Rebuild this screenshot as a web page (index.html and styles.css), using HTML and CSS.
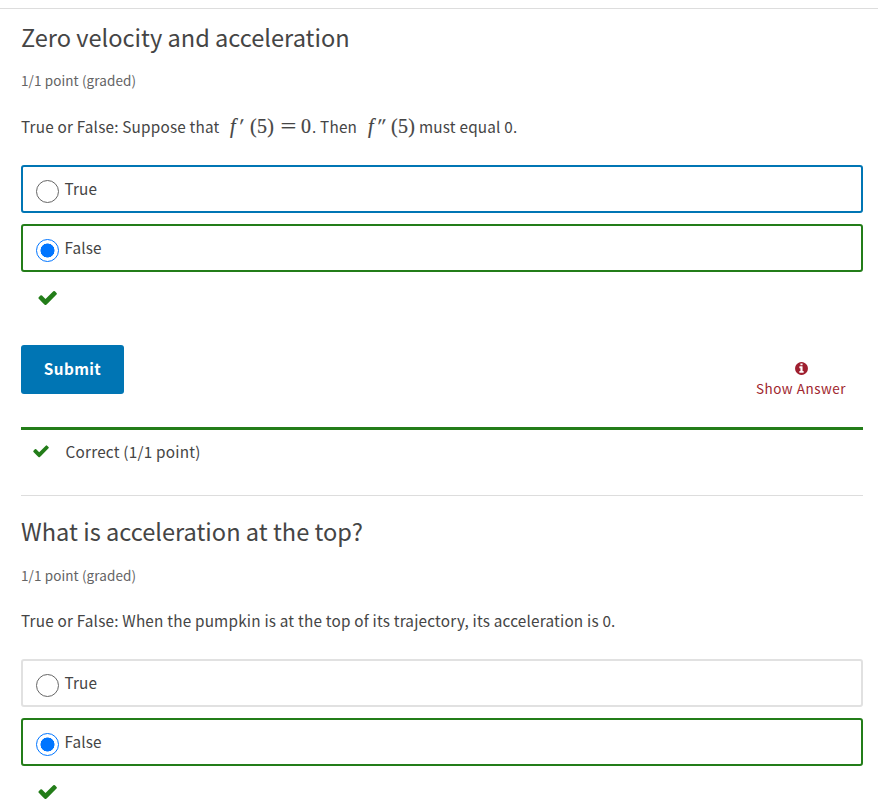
FILE: index.html
```html
<!DOCTYPE html>
<html lang="en">
<head>
<meta charset="utf-8">
<title>Zero velocity and acceleration</title>
<link rel="stylesheet" href="styles.css">
</head>
<body>
<svg class="defs" aria-hidden="true">
  <symbol id="check" viewBox="0 0 1792 1792"><path d="M1671 566q0 40-28 68l-724 724-136 136q-28 28-68 28t-68-28l-136-136-362-362q-28-28-28-68t28-68l136-136q28-28 68-28t68 28l294 295 656-657q28-28 68-28t68 28l136 136q28 28 28 68z"/></symbol>
  <symbol id="info" viewBox="0 0 1792 1792"><path d="M1152 1376v-160q0-14-9-23t-23-9h-96v-512q0-14-9-23t-23-9h-320q-14 0-23 9t-9 23v160q0 14 9 23t23 9h96v320h-96q-14 0-23 9t-9 23v160q0 14 9 23t23 9h448q14 0 23-9t9-23zm-128-896v-160q0-14-9-23t-23-9h-192q-14 0-23 9t-9 23v160q0 14 9 23t23 9h192q14 0 23-9t9-23zm640 416q0 209-103 385.500t-279.500 279.500-385.500 103-385.500-103-279.500-279.500-103-385.500 103-385.500 279.500-279.500 385.500-103 385.500 103 279.500 279.500 103 385.500z"/></symbol>
</svg>
<main class="unit">
  <section class="problem">
    <h3 class="title">Zero velocity and acceleration</h3>
    <div class="progress">1/1 point (graded)</div>
    <p class="prompt"><span class="lead">True or False: Suppose that</span><span class="math"><i>f</i><sup>′</sup><span class="arg">(5)</span><span class="eq">=</span><span class="zero">0</span></span><span class="then">. Then</span><span class="math"><i>f</i><sup class="double">″</sup><span class="arg">(5)</span></span><span class="tail">must equal 0.</span></p>
    <div class="choices">
      <label class="choice focused"><span class="radio"></span><span>True</span></label>
      <label class="choice correct"><span class="radio checked"></span><span>False</span></label>
    </div>
    <svg class="status"><use href="#check"/></svg>
    <div class="action">
      <button class="submit">Submit</button>
      <div class="show"><svg class="info"><use href="#info"/></svg><span>Show Answer</span></div>
    </div>
    <div class="notification"><svg class="note-icon"><use href="#check"/></svg><span>Correct (1/1 point)</span></div>
  </section>
  <section class="problem divided">
    <h3 class="title">What is acceleration at the top?</h3>
    <div class="progress">1/1 point (graded)</div>
    <p class="prompt"><span>True or False: When the pumpkin is at the top of its trajectory, its acceleration is 0.</span></p>
    <div class="choices">
      <label class="choice"><span class="radio"></span><span>True</span></label>
      <label class="choice correct"><span class="radio checked"></span><span>False</span></label>
    </div>
    <svg class="status"><use href="#check"/></svg>
  </section>
</main>
</body>
</html>
```
FILE: styles.css
```css
* { box-sizing: border-box; }
body {
  margin: 0;
  height: 809px;
  overflow: hidden;
  background: #fff;
  color: #454545;
  font-family: "Noto Sans CJK SC", "Noto Sans", sans-serif;
  font-size: 15.3px;
  white-space: nowrap;
}
.defs { display: none; }
.unit {
  margin-top: 8px;
  border-top: 1px solid #ddd;
  padding: 0 15px 0 21px;
}
.problem { height: 486px; padding-top: 10px; }
.divided { border-top: 1px solid #ddd; padding-top: 17px; height: 320px; }
.title {
  margin: 0;
  height: 36px;
  line-height: 36px;
  font-size: 23.6px;
  font-weight: 400;
}
.progress {
  margin-top: 15px;
  height: 20px;
  line-height: 20px;
  font-size: 13.5px;
  letter-spacing: .1px;
  color: #646464;
}
.divided .progress { margin-top: 16px; }
.divided .prompt { margin-top: 22px; }
.prompt {
  display: flex;
  align-items: baseline;
  margin: 23px 0 0;
  height: 26px;
  line-height: 26px;
  letter-spacing: .2px;
}
.lead { width: 207px; }
.then { width: 54px; }
.math {
  display: flex;
  align-items: baseline;
  font-family: "Liberation Serif", serif;
  font-size: 20px;
  line-height: 26px;
  letter-spacing: 0;
  -webkit-text-stroke: .2px #454545;
}
.math i { width: 11px; padding-left: 2px; }
.math sup {
  width: 11px;
  font-size: 21px;
  line-height: 1;
  vertical-align: baseline;
  transform: skewX(-8deg);
}
.math .double { width: 14px; }
.arg { width: 28px; letter-spacing: .3px; }
.eq { width: 23px; padding-left: 5px; transform: scaleX(1.4); }
.zero { width: 11px; }
.choices { margin-top: 26px; display: grid; gap: 11px; }
.choice {
  display: flex;
  height: 48px;
  border: 2px solid #e1e1e1;
  border-radius: 3px;
  padding-left: 13px;
  line-height: 42px;
  letter-spacing: .15px;
}
.choice.focused { border-color: #0075b4; }
.choice.correct { border-color: #237d19; }
.radio {
  width: 23px;
  height: 23px;
  margin: 13px 5.5px 0 0;
  border: 1px solid #666;
  border-radius: 50%;
}
.radio.checked {
  border-color: #0075ff;
  background: radial-gradient(circle, #0075ff 6.7px, transparent 7.3px);
}
.status {
  display: block;
  width: 21.3px;
  height: 21.3px;
  margin: 15.2px 0 0 15.7px;
  fill: #237d19;
}
.action {
  display: flex;
  justify-content: space-between;
  height: 49px;
  margin-top: 36.5px;
}
.submit {
  width: 103px;
  height: 49px;
  padding: 0 0 2px;
  border: 0;
  border-radius: 3px;
  background: #0075b4;
  color: #fff;
  font: 700 15.3px/47px "Noto Sans CJK SC", sans-serif;
  letter-spacing: .4px;
}
.show {
  display: flex;
  flex-direction: column;
  align-items: center;
  width: 90px;
  margin: 16px 17px 0 0;
  color: #a0262e;
  font-size: 13.5px;
  line-height: 20px;
  letter-spacing: .5px;
}
.show span { margin-top: 2px; }
.info { display: block; flex: none; width: 15px; height: 15px; fill: #9f1f2f; }
.notification {
  display: flex;
  height: 50px;
  margin-top: 33px;
  border-top: 3px solid #237d19;
  line-height: 42px;
  letter-spacing: .23px;
}
.note-icon {
  width: 18px;
  height: 18px;
  margin: 11.600px 16px 0 10.500px;
  fill: #237d19;
}
```
